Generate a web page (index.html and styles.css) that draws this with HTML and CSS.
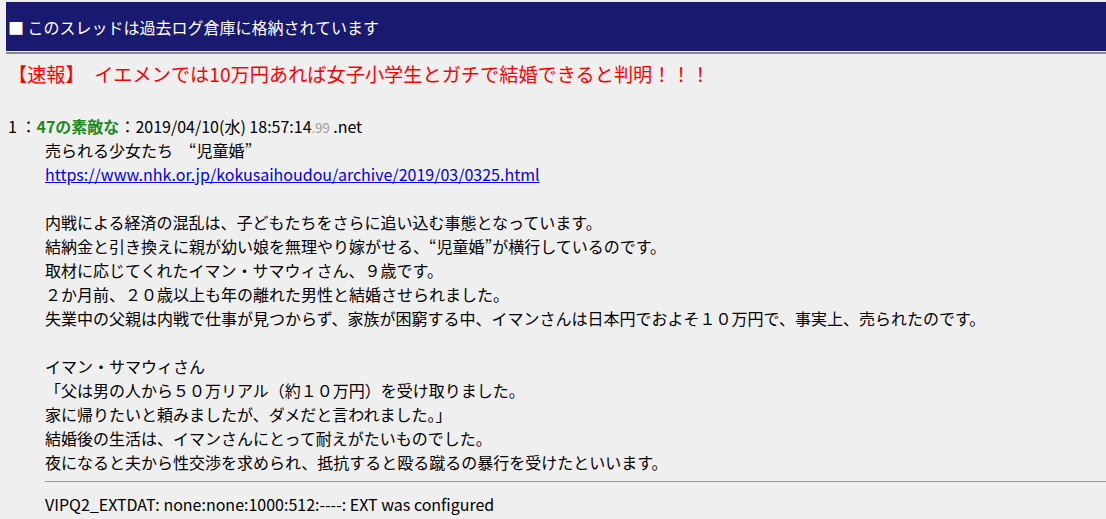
FILE: index.html
```html
<!DOCTYPE html>
<html lang="ja">
<head>
  <meta charset="UTF-8">
  <title>イエメンでは10万円あれば女子小学生とガチで結婚できると判明！！！</title>
  <link rel="stylesheet" href="styles.css">
</head>
<body>
  <div id="kako">■ このスレッドは過去ログ倉庫に格納されています</div>
  <hr id="kako-line">
  <h1 class="title">【速報】　イエメンでは10万円あれば女子小学生とガチで結婚できると判明！！！</h1>
  <div class="thread">
    <div class="post">
      <div class="meta">
        <span class="number">1</span> ：<span class="name">47の素敵な</span>：<span class="date">2019/04/10(水) 18:57:14<span class="ms">.99</span> .net</span>
      </div>
      <div class="message">
        売られる少女たち　“児童婚”<br>
        <a href="#">https://www.nhk.or.jp/kokusaihoudou/archive/2019/03/0325.html</a><br>
        <br>
        内戦による経済の混乱は、子どもたちをさらに追い込む事態となっています。<br>
        結納金と引き換えに親が幼い娘を無理やり嫁がせる、“児童婚”が横行しているのです。<br>
        取材に応じてくれたイマン・サマウィさん、９歳です。<br>
        ２か月前、２０歳以上も年の離れた男性と結婚させられました。<br>
        失業中の父親は内戦で仕事が見つからず、家族が困窮する中、イマンさんは日本円でおよそ１０万円で、事実上、売られたのです。<br>
        <br>
        イマン・サマウィさん<br>
        「父は男の人から５０万リアル（約１０万円）を受け取りました。<br>
        家に帰りたいと頼みましたが、ダメだと言われました。」<br>
        結婚後の生活は、イマンさんにとって耐えがたいものでした。<br>
        夜になると夫から性交渉を求められ、抵抗すると殴る蹴るの暴行を受けたといいます。
      </div>
    </div>
    <hr class="ext-line">
    <div class="extdat">VIPQ2_EXTDAT: none:none:1000:512:----: EXT was configured</div>
  </div>
</body>
</html>
```

FILE: styles.css
```css
html, body {
  margin: 0;
  padding: 0;
  background: #efefef;
  color: #000;
  font-family: "Noto Sans CJK JP", "Noto Sans", sans-serif;
  font-size: 16px;
}
#kako {
  margin: 2px 0 0 6px;
  padding-left: 2px;
  height: 49px;
  line-height: 51px;
  background: #191970;
  color: #fff;
  font-size: 16px;
}
#kako-line {
  margin: 1px 0 0 6px;
  border: none;
  border-top: 2px solid #8a8a8a;
  height: 0;
}
.title {
  margin: 6px 0 0 0;
  padding-left: 8px;
  font-size: 19.2px;
  font-weight: normal;
  line-height: 28px;
  color: #ff0000;
}
.thread {
  padding-top: 26px;
}
.post {
  line-height: 24px;
}
.meta {
  height: 24px;
  padding-left: 8px;
}
.name {
  color: #1e8a1e;
  font-weight: bold;
}
.ms {
  color: #999;
  font-size: 13px;
  line-height: 1;
}
.message {
  padding-left: 45px;
}
.message a {
  color: #0000ee;
}
.ext-line {
  margin: 7px 0 0 45px;
  border: none;
  border-top: 1px solid #999;
  height: 0;
}
.extdat {
  padding-left: 45px;
  line-height: 24px;
  margin-top: 10px;
}
```
